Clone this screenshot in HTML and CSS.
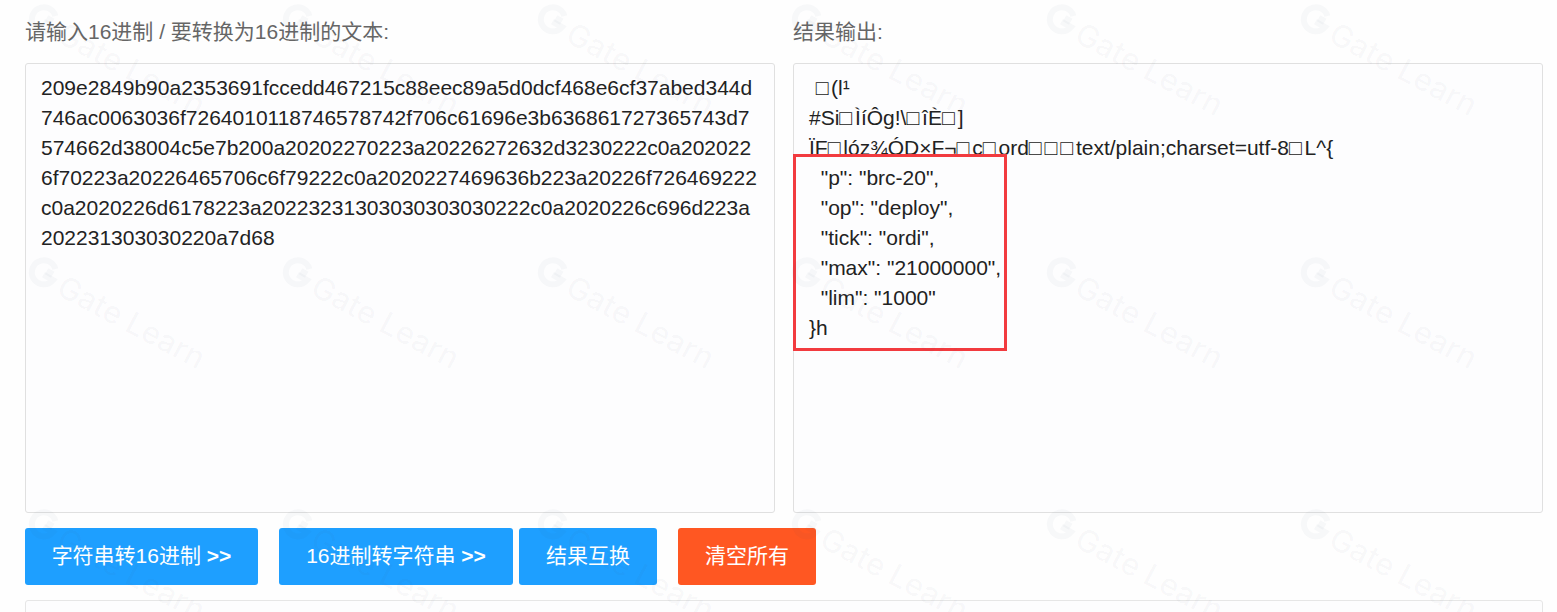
FILE: index.html
```html
<!DOCTYPE html>
<html lang="zh">
<head>
<meta charset="utf-8">
<title>16进制转换</title>
<link rel="stylesheet" href="styles.css">
</head>
<body>
<main class="page">
  <section class="columns">
    <div class="col">
      <label class="label">请输入16进制 / 要转换为16进制的文本:</label>
      <div class="box box-hex">209e2849b90a2353691fccedd467215c88eec89a5d0dcf468e6cf37abed344d746ac0063036f7264010118746578742f706c61696e3b636861727365743d7574662d38004c5e7b200a20202270223a20226272632d3230222c0a2020226f70223a20226465706c6f79222c0a2020227469636b223a20226f726469222c0a2020226d6178223a20223231303030303030222c0a2020226c696d223a202231303030220a7d68</div>
    </div>
    <div class="col col-result">
      <label class="label">结果输出:</label>
      <div class="box box-out"> <span class="nb nb-first">□</span>(l¹
#Si<span class="nb">□</span>ÌíÔg!\<span class="nb">□</span>îÈ<span class="nb">□</span>]
ÏF<span class="nb">□</span>lóz¾ÓD×F¬<span class="nb">□</span>c<span class="nb">□</span>ord<span class="nb">□</span><span class="nb">□</span><span class="nb">□</span>text/plain;charset=utf-8<span class="nb">□</span>L^{
  "p": "brc-20",
  "op": "deploy",
  "tick": "ordi",
  "max": "21000000",
  "lim": "1000"
}h</div>
      <div class="highlight"></div>
    </div>
  </section>
  <div class="actions">
    <button class="btn btn-a">字符串转16进制 <b class="arrows">&gt;&gt;</b></button>
    <button class="btn btn-b">16进制转字符串 <b class="arrows">&gt;&gt;</b></button>
    <button class="btn btn-c">结果互换</button>
    <button class="btn btn-d">清空所有</button>
  </div>
  <div class="panel"></div>
</main>
<div class="watermark" aria-hidden="true">
  <div class="wm"><svg class="wm-logo" viewBox="0 0 32 32"><path d="M23.5 8.2A12 12 0 1 0 27 19H16" fill="none" stroke="currentColor" stroke-width="6"/><rect x="17" y="11" width="7" height="7" fill="currentColor"/></svg><span class="wm-text">Gate Learn</span></div>
  <div class="wm"><svg class="wm-logo" viewBox="0 0 32 32"><path d="M23.5 8.2A12 12 0 1 0 27 19H16" fill="none" stroke="currentColor" stroke-width="6"/><rect x="17" y="11" width="7" height="7" fill="currentColor"/></svg><span class="wm-text">Gate Learn</span></div>
  <div class="wm"><svg class="wm-logo" viewBox="0 0 32 32"><path d="M23.5 8.2A12 12 0 1 0 27 19H16" fill="none" stroke="currentColor" stroke-width="6"/><rect x="17" y="11" width="7" height="7" fill="currentColor"/></svg><span class="wm-text">Gate Learn</span></div>
  <div class="wm"><svg class="wm-logo" viewBox="0 0 32 32"><path d="M23.5 8.2A12 12 0 1 0 27 19H16" fill="none" stroke="currentColor" stroke-width="6"/><rect x="17" y="11" width="7" height="7" fill="currentColor"/></svg><span class="wm-text">Gate Learn</span></div>
  <div class="wm"><svg class="wm-logo" viewBox="0 0 32 32"><path d="M23.5 8.2A12 12 0 1 0 27 19H16" fill="none" stroke="currentColor" stroke-width="6"/><rect x="17" y="11" width="7" height="7" fill="currentColor"/></svg><span class="wm-text">Gate Learn</span></div>
  <div class="wm"><svg class="wm-logo" viewBox="0 0 32 32"><path d="M23.5 8.2A12 12 0 1 0 27 19H16" fill="none" stroke="currentColor" stroke-width="6"/><rect x="17" y="11" width="7" height="7" fill="currentColor"/></svg><span class="wm-text">Gate Learn</span></div>
  <div class="wm"><svg class="wm-logo" viewBox="0 0 32 32"><path d="M23.5 8.2A12 12 0 1 0 27 19H16" fill="none" stroke="currentColor" stroke-width="6"/><rect x="17" y="11" width="7" height="7" fill="currentColor"/></svg><span class="wm-text">Gate Learn</span></div>
  <div class="wm"><svg class="wm-logo" viewBox="0 0 32 32"><path d="M23.5 8.2A12 12 0 1 0 27 19H16" fill="none" stroke="currentColor" stroke-width="6"/><rect x="17" y="11" width="7" height="7" fill="currentColor"/></svg><span class="wm-text">Gate Learn</span></div>
  <div class="wm"><svg class="wm-logo" viewBox="0 0 32 32"><path d="M23.5 8.2A12 12 0 1 0 27 19H16" fill="none" stroke="currentColor" stroke-width="6"/><rect x="17" y="11" width="7" height="7" fill="currentColor"/></svg><span class="wm-text">Gate Learn</span></div>
  <div class="wm"><svg class="wm-logo" viewBox="0 0 32 32"><path d="M23.5 8.2A12 12 0 1 0 27 19H16" fill="none" stroke="currentColor" stroke-width="6"/><rect x="17" y="11" width="7" height="7" fill="currentColor"/></svg><span class="wm-text">Gate Learn</span></div>
  <div class="wm"><svg class="wm-logo" viewBox="0 0 32 32"><path d="M23.5 8.2A12 12 0 1 0 27 19H16" fill="none" stroke="currentColor" stroke-width="6"/><rect x="17" y="11" width="7" height="7" fill="currentColor"/></svg><span class="wm-text">Gate Learn</span></div>
  <div class="wm"><svg class="wm-logo" viewBox="0 0 32 32"><path d="M23.5 8.2A12 12 0 1 0 27 19H16" fill="none" stroke="currentColor" stroke-width="6"/><rect x="17" y="11" width="7" height="7" fill="currentColor"/></svg><span class="wm-text">Gate Learn</span></div>
  <div class="wm"><svg class="wm-logo" viewBox="0 0 32 32"><path d="M23.5 8.2A12 12 0 1 0 27 19H16" fill="none" stroke="currentColor" stroke-width="6"/><rect x="17" y="11" width="7" height="7" fill="currentColor"/></svg><span class="wm-text">Gate Learn</span></div>
  <div class="wm"><svg class="wm-logo" viewBox="0 0 32 32"><path d="M23.5 8.2A12 12 0 1 0 27 19H16" fill="none" stroke="currentColor" stroke-width="6"/><rect x="17" y="11" width="7" height="7" fill="currentColor"/></svg><span class="wm-text">Gate Learn</span></div>
  <div class="wm"><svg class="wm-logo" viewBox="0 0 32 32"><path d="M23.5 8.2A12 12 0 1 0 27 19H16" fill="none" stroke="currentColor" stroke-width="6"/><rect x="17" y="11" width="7" height="7" fill="currentColor"/></svg><span class="wm-text">Gate Learn</span></div>
  <div class="wm"><svg class="wm-logo" viewBox="0 0 32 32"><path d="M23.5 8.2A12 12 0 1 0 27 19H16" fill="none" stroke="currentColor" stroke-width="6"/><rect x="17" y="11" width="7" height="7" fill="currentColor"/></svg><span class="wm-text">Gate Learn</span></div>
  <div class="wm"><svg class="wm-logo" viewBox="0 0 32 32"><path d="M23.5 8.2A12 12 0 1 0 27 19H16" fill="none" stroke="currentColor" stroke-width="6"/><rect x="17" y="11" width="7" height="7" fill="currentColor"/></svg><span class="wm-text">Gate Learn</span></div>
  <div class="wm"><svg class="wm-logo" viewBox="0 0 32 32"><path d="M23.5 8.2A12 12 0 1 0 27 19H16" fill="none" stroke="currentColor" stroke-width="6"/><rect x="17" y="11" width="7" height="7" fill="currentColor"/></svg><span class="wm-text">Gate Learn</span></div>
</div>
</body>
</html>
```
FILE: styles.css
```css
html, body {
  margin: 0;
  height: 612px;
  overflow: hidden;
  background: #fefefe;
}
body {
  position: relative;
  font-family: "Liberation Sans", "Noto Sans CJK SC", sans-serif;
  font-size: 21px;
  line-height: 30px;
  color: #222;
}
.page {
  padding: 17px 14px 0 25px;
}
.columns {
  display: grid;
  grid-template-columns: 750px 750px;
  column-gap: 18px;
}
.col {
  position: relative;
}
.label {
  display: block;
  color: #666;
  margin-bottom: 16px;
}
.box {
  box-sizing: border-box;
  height: 450px;
  padding: 9px 16px 9px 15px;
  border: 1px solid #e0e0e0;
  border-radius: 3px;
  background: #fdfdfe;
  color: #222;
}
.box-hex {
  word-break: break-all;
}
.box-out {
  white-space: pre-wrap;
}
.nb {
  letter-spacing: 3px;
}
.nb-first {
  margin-left: 1px;
  letter-spacing: 2.5px;
}
.highlight {
  position: absolute;
  left: 0;
  top: 137px;
  width: 214px;
  height: 197px;
  box-sizing: border-box;
  border: 3px solid #f23b3f;
}
.actions {
  display: flex;
  margin-top: 15px;
}
.btn {
  height: 57px;
  padding: 0 0 1px;
  border: 0;
  border-radius: 3px;
  color: #fff;
  font: inherit;
  background: #1e9fff;
}
.arrows {
  font-weight: 700;
}
.btn-a { width: 233px; }
.btn-b { width: 234px; margin-left: 21px; }
.btn-c { width: 138px; margin-left: 6px; }
.btn-d { width: 138px; margin-left: 21px; background: #ff5722; }
.panel {
  box-sizing: border-box;
  height: 60px;
  margin-top: 15px;
  border: 1px solid #e6e6e6;
  border-radius: 3px;
  background: #fdfdfe;
}
.watermark {
  position: absolute;
  left: 32px;
  top: 5px;
  display: grid;
  grid-template-columns: repeat(6, 254.4px);
  grid-auto-rows: 252.6px;
  color: rgba(70, 90, 120, 0.035);
  pointer-events: none;
}
.wm {
  position: relative;
}
.wm-logo {
  position: absolute;
  left: -3px;
  top: -2px;
  width: 32px;
  height: 32px;
  transform: rotate(30deg);
}
.wm-text {
  position: absolute;
  left: 28px;
  top: 8px;
  font-family: "Inter", "Liberation Sans", sans-serif;
  font-size: 31px;
  font-weight: 500;
  line-height: 36px;
  white-space: nowrap;
  transform: rotate(28deg);
  transform-origin: left center;
}
```
